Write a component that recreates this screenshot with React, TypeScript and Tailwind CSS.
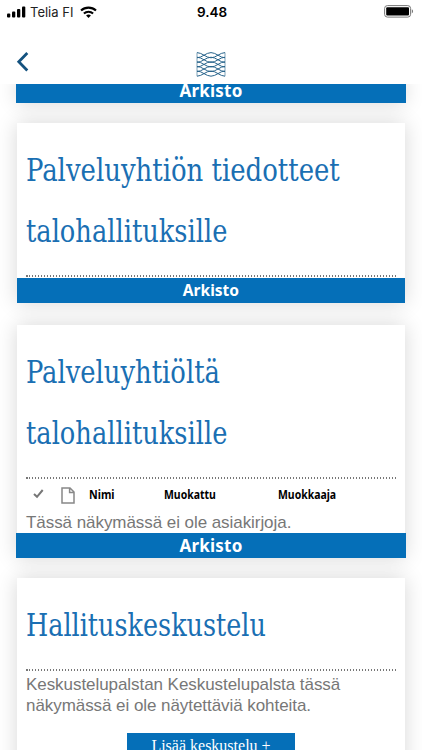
import React from "react";

const waveRows = [3.2, 7.8, 12.4, 17, 21.6];

const Heading = ({ lines }: { lines: { text: string; scale: string }[] }) => (
  <h2 className="font-['DejaVu_Serif_Condensed','DejaVu_Serif',serif] [font-stretch:condensed] text-[32px] leading-[61px] text-[#1a6fb3]">
    {lines.map((line) => (
      <span
        key={line.text}
        className={`block w-max origin-left whitespace-nowrap ${line.scale}`}
      >
        {line.text}
      </span>
    ))}
  </h2>
);

const Divider = () => (
  <div className="h-[1.5px] w-[370px] bg-[repeating-linear-gradient(90deg,#777_0px,#777_1.5px,#fff_1.5px,#fff_3px)]" />
);

const StatusBar = () => (
  <div className="flex h-6 items-center justify-between pt-px pr-2 pl-[7px]">
    <div className="flex w-[140px] items-center">
      <svg className="-mt-[2px]" width="19" height="12" viewBox="0 0 19 12">
        <rect x="0" y="7.5" width="3.3" height="4" rx="1" />
        <rect x="5" y="5.5" width="3.3" height="6" rx="1" />
        <rect x="10" y="3" width="3.3" height="8.5" rx="1" />
        <rect x="15" y="0.5" width="3.3" height="11" rx="1" />
      </svg>
      <span className="ml-1 w-[50px] text-[13px] whitespace-nowrap text-[#222]">
        Telia FI
      </span>
      <svg
        className="-mt-[2px]"
        width="17"
        height="12"
        viewBox="0 0 17 12"
        fill="none"
        stroke="#000"
        strokeWidth="2.1"
      >
        <path d="M1 4.6C5.2.6 11.8.6 16 4.6" />
        <path d="M3.9 7.6c2.6-2.4 6.6-2.4 9.2 0" />
        <path d="M8.5 12 6.1 9.5c1.4-1.2 3.4-1.2 4.8 0Z" fill="#000" stroke="none" />
      </svg>
    </div>
    <span className="pl-[3px] text-[13.5px] font-semibold">9.48</span>
    <div className="flex w-[140px] justify-end">
      <svg className="-mt-[2px]" width="30" height="13" viewBox="0 0 30 13">
        <rect x="0.6" y="0.6" width="26" height="11.5" rx="2.8" fill="none" stroke="#777" strokeWidth="1" />
        <rect x="2.2" y="2.2" width="22.8" height="8.3" rx="1" />
        <path d="M27.8 4.3c1.7.7 1.7 3.4 0 4.1Z" fill="#777" />
      </svg>
    </div>
  </div>
);

const Header = () => (
  <header className="relative z-10 h-[84px] shrink-0 bg-white font-[Inter,sans-serif]">
    <StatusBar />
    <div className="flex items-start pt-7 pl-4">
      <svg width="14" height="20" viewBox="0 0 14 20" fill="none" stroke="#14527f" strokeWidth="2.8">
        <path d="M11.3 1 2.8 9.7l8.5 8.7" />
      </svg>
      <svg
        className="ml-[166px]"
        width="30"
        height="25"
        viewBox="0 0 30 25"
        fill="none"
        stroke="#28648c"
        strokeWidth="1"
      >
        {/* each row is a pair of waves in opposite phase */}
        {waveRows.map((y) => (
          <g key={y} transform={`translate(1 ${y})`}>
            <path d="M0-2.6C5-2.6 9 2.6 14 2.6S23-2.6 28-2.6" />
            <path d="M0 2.6C5 2.6 9-2.6 14-2.6S23 2.6 28 2.6" />
          </g>
        ))}
        <path d="M1 .6v23.6M29 .6v23.6" strokeWidth="0.6" />
      </svg>
    </div>
  </header>
);

const ArchiveWide = () => (
  <div className="-mx-px flex h-[25px] shrink-0 items-center justify-center bg-[#056fb8] font-['Noto_Sans',sans-serif] text-[17px] leading-none font-bold text-white">
    <span className="tracking-[0.2px]">Arkisto</span>
  </div>
);

const App = () => {
  return (
    <div className="flex h-[750px] w-[422px] flex-col overflow-hidden bg-white font-['Liberation_Sans',sans-serif] text-black">
      <Header />
      <main className="-mt-[6px] flex flex-col pr-[17px] pl-[17px]">
        <section className="shadow-[0_0_20px_rgba(0,0,0,0.16)]">
          <ArchiveWide />
        </section>

        {/* Bulletins */}
        <section className="mt-5 flex h-[180px] flex-col justify-between bg-white shadow-[0_0_20px_rgba(0,0,0,0.16)]">
          <div className="pt-[17px] pl-[9px]">
            <Heading
              lines={[
                { text: "Palveluyhtiön tiedotteet", scale: "scale-x-[0.901]" },
                { text: "talohallituksille", scale: "scale-x-[0.893]" },
              ]}
            />
            <div className="h-[13px]" />
            <Divider />
          </div>
          <div className="flex h-[25px] items-center justify-center bg-[#056fb8] pb-px font-['Noto_Sans',sans-serif] text-[16px] leading-none font-bold text-white">
            <span className="scale-x-[0.97]">Arkisto</span>
          </div>
        </section>

        {/* Documents */}
        <section className="mt-[22px] flex h-[233px] flex-col justify-between bg-white shadow-[0_0_20px_rgba(0,0,0,0.16)]">
          <div className="pt-[17px] pl-[9px]">
            <Heading
              lines={[
                { text: "Palveluyhtiöltä", scale: "scale-x-[0.897]" },
                { text: "talohallituksille", scale: "scale-x-[0.893]" },
              ]}
            />
            <div className="h-[13px]" />
            <Divider />
            <div className="mt-[7px] flex h-[19px] items-center font-['Noto_Sans',sans-serif] text-[11.5px] font-bold">
              <svg className="-mt-[3px] ml-[7px]" width="11" height="10" viewBox="0 0 11 10" fill="none" stroke="#777" strokeWidth="2">
                <path d="m1 5 3 2.8L9.7 1" />
              </svg>
              <svg className="ml-[17px]" width="14" height="17" viewBox="0 0 14 17" fill="none" stroke="#888" strokeWidth="1.5">
                <path d="M1 1h8l4 4v11H1ZM8.6 1v4.5H13" />
              </svg>
              <span className="ml-[14px] w-[75px] origin-left scale-x-[0.93]">Nimi</span>
              <span className="w-[114px] origin-left scale-x-[0.91]">Muokattu</span>
              <span className="origin-left scale-x-[0.91]">Muokkaaja</span>
            </div>
            <p className="mt-[7px] h-5 text-[17px] leading-[22px] tracking-[-0.06px] whitespace-nowrap text-[#777]">
              Tässä näkymässä ei ole asiakirjoja.
            </p>
          </div>
          <ArchiveWide />
        </section>

        {/* Discussion */}
        <section className="mt-5 h-[230px] shrink-0 bg-white pt-[17px] pl-[9px] shadow-[0_0_20px_rgba(0,0,0,0.16)]">
          <Heading lines={[{ text: "Hallituskeskustelu", scale: "scale-x-[0.885]" }]} />
          <div className="h-[13px]" />
          <Divider />
          <p className="mt-[3px] text-[17px] leading-[21px] tracking-[-0.06px] whitespace-nowrap text-[#777]">
            Keskustelupalstan Keskustelupalsta tässä
            <br />
            näkymässä ei ole näytettäviä kohteita.
          </p>
          <button className="mt-[17px] ml-[101px] block h-[17px] w-[168px] bg-[#056fb8] font-['Liberation_Serif',serif] text-[16px] leading-[25px] text-white">
            Lisää keskustelu +
          </button>
        </section>
      </main>
    </div>
  );
};

export default App;
